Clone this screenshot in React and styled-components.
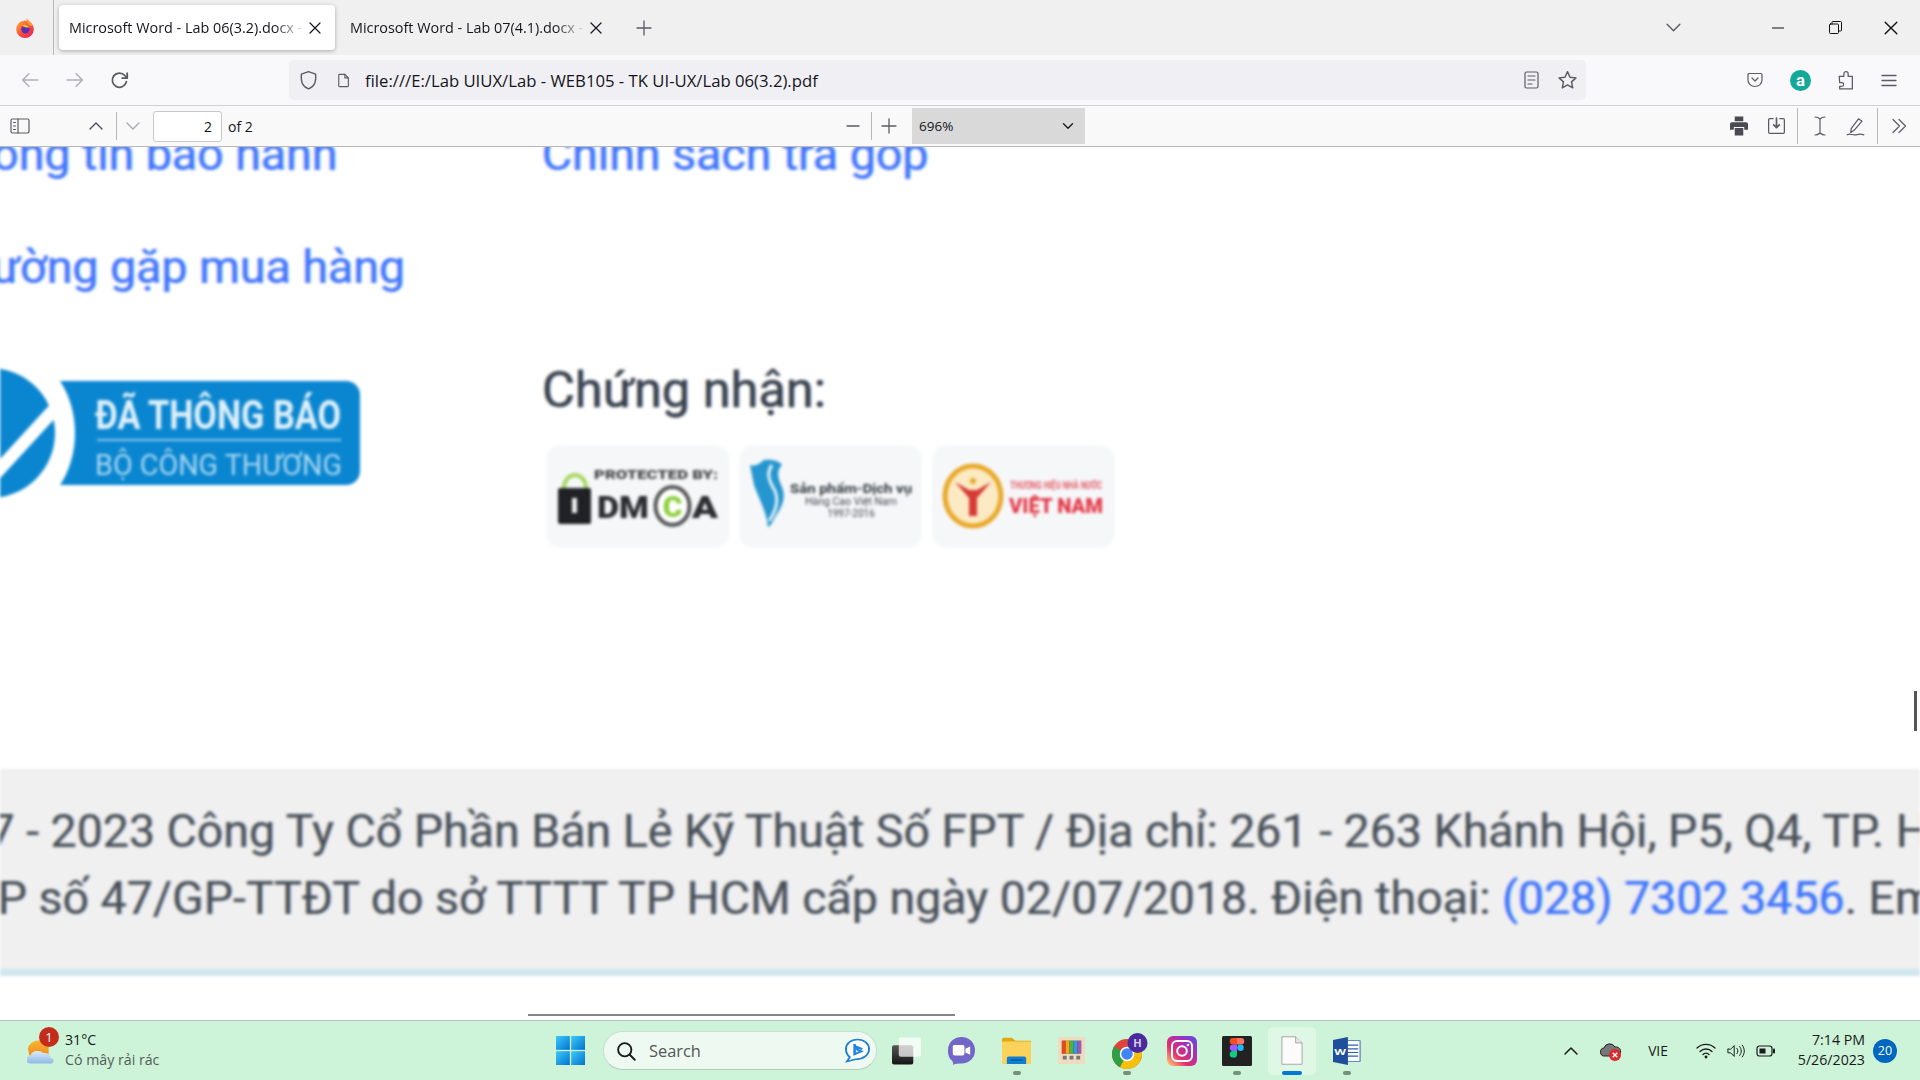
import React from "react";
import styled, { createGlobalStyle } from "styled-components";

const Global = createGlobalStyle`
  html, body { margin: 0; padding: 0; width: 1920px; height: 1080px; overflow: hidden; background: #fff; }
  * { box-sizing: border-box; }
  #root { width: 1920px; height: 1080px; }
`;
const UI = `"Open Sans", "Noto Sans", sans-serif`;
const DOC = `Roboto, "Noto Sans", sans-serif`;
const BLUE_FRINGE = `-1.2px 0 0 rgba(190,90,255,.38), 1.2px 0 0 rgba(0,190,255,.38)`;
const DARK_FRINGE = `-1.2px 0 0 rgba(255,165,70,.38), 1.2px 0 0 rgba(60,130,255,.38)`;

const Screen = styled.div`display:flex;flex-direction:column;width:1920px;height:1080px;font-family:${UI};position:relative;overflow:hidden;`;
const TabBar = styled.div`display:flex;align-items:center;height:55px;background:#f0f0f0;flex:none;padding-right:21px;`;
const Logo = styled.div`display:flex;align-items:center;justify-content:center;width:54px;height:55px;padding-right:4px;border-right:1px solid #b9b9bc;`;
const Tab = styled.div`
  display:flex;align-items:center;width:276px;height:45px;margin-left:${p=>p.$gap||0}px;padding-left:10px;border-radius:4px;
  background:${p=>p.$active?"#fff":"transparent"};box-shadow:${p=>p.$active?"0 1px 4px rgba(0,0,0,.3)":"none"};
  color:#15141a;
`;
const TabTitle = styled.span`
  width:236px;white-space:nowrap;overflow:hidden;font-size:14.4px;
  -webkit-mask-image:linear-gradient(90deg,#000 87%,transparent 100%);mask-image:linear-gradient(90deg,#000 87%,transparent 100%);
`;
const Slot = styled.div`
  display:flex;align-items:center;justify-content:center;flex:none;width:${p=>p.$w}px;margin-left:${p=>p.$ml||0}px;
  color:${p=>p.$c||"#5b5b66"};position:relative;
`;
const Grow = styled.div`flex:1;`;
const NavBar = styled.div`display:flex;align-items:center;height:51px;background:#f9f9fb;flex:none;border-bottom:1px solid #cfcfd8;padding-left:8px;`;
const Url = styled.div`
  display:flex;align-items:center;width:1297px;height:40px;margin-left:147px;padding-right:7px;background:#f0f0f4;border-radius:5px;flex:none;
`;
const UrlText = styled.span`flex:1;font-size:16.7px;color:#15141a;margin-left:4px;white-space:nowrap;`;
const PdfBar = styled.div`display:flex;align-items:center;height:41px;background:#f9f9fa;border-bottom:1px solid #b8b8b8;flex:none;padding-right:11px;`;
const Sep = styled.div`width:1px;height:${p=>p.$h||28}px;background:#b8b8b8;flex:none;margin-left:${p=>p.$ml||0}px;`;
const PageInput = styled.div`
  width:69px;height:31px;margin-left:4px;border:1px solid #c8c8c8;border-radius:3px;background:#fff;display:flex;align-items:center;justify-content:flex-end;
  padding-right:9px;font-size:14px;color:#15141a;
`;
const OfText = styled.span`font-size:14px;color:#15141a;margin-left:6px;width:30px;white-space:nowrap;`;
const ZoomSel = styled.div`
  width:173px;height:36px;margin-left:13px;background:#d9d9da;display:flex;align-items:center;justify-content:space-between;padding:0 10px 0 7px;font-size:13.5px;color:#15141a;flex:none;
`;

const Doc = styled.div`flex:1;position:relative;overflow:hidden;background:#fff;font-family:${DOC};display:flex;flex-direction:column;`;
const Blur = styled.div`filter:blur(1.35px);display:flex;flex-direction:column;height:100%;`;
const Cols = styled.div`display:grid;grid-template-columns:542px 1fr;height:622px;flex:none;`;
const Col = styled.div`display:flex;flex-direction:column;min-width:0;`;
const LinkText = styled.div`
  font-size:46.5px;line-height:56px;color:#3f74fa;white-space:nowrap;margin-left:${p=>p.$ml||0}px;margin-top:${p=>p.$mt||0}px;
  text-shadow:${BLUE_FRINGE};
`;
const LogoWrap = styled.div`margin-top:72px;height:136px;`;
const Heading = styled.div`font-size:50.5px;line-height:60px;color:#38434f;margin-top:178px;-webkit-text-stroke:.4px #38434f;text-shadow:${DARK_FRINGE};`;
const BadgeRow = styled.div`display:flex;margin:25px 0 0 4px;gap:10px;`;
const Badge = styled.div`width:183px;height:103px;border-radius:15px;background:#f6f7f9;display:flex;align-items:center;justify-content:center;flex:none;`;
const Band = styled.div`height:200px;background:#f0f0f0;flex:none;padding-top:29px;overflow:hidden;`;
const BandLine = styled.div`
  font-size:46.5px;line-height:67px;color:#465059;white-space:nowrap;margin-left:${p=>p.$ml}px;text-shadow:${DARK_FRINGE};
  span{color:#3f74fa;text-shadow:${BLUE_FRINGE};}
`;
const BandEdge = styled.div`height:7px;background:#d0e6f0;flex:none;`;
const VThumb = styled.div`position:absolute;right:3px;top:544px;width:3px;height:40px;background:#555;`;
const HThumb = styled.div`position:absolute;left:528px;bottom:4px;width:427px;height:2px;background:#858585;`;

const Taskbar = styled.div`
  display:flex;align-items:center;height:60px;flex:none;background:#cdf3d8;border-top:1px solid #aec6b5;padding-right:15px;color:#1a1a1a;
`;
const Weather = styled.div`display:flex;align-items:center;width:543px;padding-left:27px;flex:none;`;
const WeatherIcon = styled.div`position:relative;width:30px;height:28px;margin-right:8px;flex:none;`;
const RedDot = styled.div`position:absolute;left:12px;top:-10px;width:20px;height:20px;border-radius:50%;background:#c42b1c;color:#fff;font-size:13px;display:flex;align-items:center;justify-content:center;`;
const WeatherText = styled.div`display:flex;flex-direction:column;font-size:14.2px;line-height:20px;margin-top:-1px;`;
const Dim = styled.span`color:#555c58;`;
const Search = styled.div`
  display:flex;align-items:center;width:274px;height:39px;margin-left:5px;border-radius:20px;background:#eefaf1;border:1px solid #c9dfd0;border-bottom-color:#b4cbbb;padding:0 6px 0 12px;font-size:16.4px;color:#555;flex:none;
`;
const SearchLabel = styled.span`flex:1;margin-left:13px;`;
const TaskIcon = styled.div`
  position:relative;display:flex;align-items:center;justify-content:center;width:${p=>p.$active?48:55}px;height:48px;flex:none;margin-right:${p=>p.$active?3.5:0}px;margin-left:${p=>p.$ml||(p.$active?3.5:0)}px;
  background:${p=>p.$active?"#dff7e5":"transparent"};border-radius:5px;
`;
const Pip = styled.div`position:absolute;bottom:0;left:50%;transform:translateX(-50%);width:${p=>p.$on?20:8}px;height:4px;border-radius:2px;background:${p=>p.$on?"#0078d4":"#76907e"};`;
const Lang = styled.span`font-size:13.8px;color:#1a1a1a;`;
const Clock = styled.div`width:78px;flex:none;display:flex;flex-direction:column;align-items:flex-end;font-size:14.2px;line-height:20px;margin-top:-1px;color:#1a1a1a;`;
const Count = styled.div`width:24px;height:24px;border-radius:50%;background:#0067c0;color:#fff;font-size:12.5px;display:flex;align-items:center;justify-content:center;`;

const S = ({w=16,h=16,vb="0 0 16 16",children,fill="none",stroke="currentColor",sw=1.3})=>(
  <svg width={w} height={h} viewBox={vb} fill={fill} stroke={stroke} strokeWidth={sw} strokeLinecap="round" strokeLinejoin="round">{children}</svg>
);
const Firefox = ()=>(
  <svg width="20" height="21" viewBox="0 0 22 24">
    <defs>
      <linearGradient id="ff" x1="0" y1="0" x2="1" y2="1"><stop offset="0" stopColor="#ffb32c"/><stop offset=".5" stopColor="#ff4f3c"/><stop offset="1" stopColor="#e3195f"/></linearGradient>
    </defs>
    <circle cx="11" cy="14" r="10" fill="url(#ff)"/>
    <path d="M12 1c3 3 7 5 8 10l-5-2z" fill="#ff9a2e"/>
    <circle cx="11.500" cy="14" r="4.800" fill="#5b2fb0"/>
    <path d="M7 10c3-2 7-1 9 2l-4 0z" fill="#ffbd2e"/>
  </svg>
);
const X = ({s=12})=>(<S w={s} h={s} vb="0 0 12 12" sw={1.2}><path d="M1 1l10 10M11 1L1 11"/></S>);
const Chevron = ({up,s=16,sw=1.5})=>(<S w={s} h={s} sw={sw}><path d={up?"M2 11l6-6 6 6":"M2 5l6 6 6-6"}/></S>);

const Bing = ()=>(
  <svg width="25" height="25" viewBox="0 0 26 34" preserveAspectRatio="none">
    <path d="M13 2c7 0 12 6 12 13 0 8-6 14-14 14l-9 3 3-6C2 23 1 19 1 15 1 8 6 2 13 2z" fill="#fff" stroke="#1b7fd6" strokeWidth="2"/>
    <path d="M10 8v14l7-4-4-2-1-4 6 3" fill="none" stroke="#1b84e0" strokeWidth="2.600"/>
  </svg>
);
const Win = ()=>(
  <svg width="29" height="29" viewBox="0 0 30 30">
    <defs><linearGradient id="w" x1="0" y1="0" x2="1" y2="1"><stop offset="0" stopColor="#3ecbf7"/><stop offset="1" stopColor="#0072d2"/></linearGradient></defs>
    <rect x="0" y="0" width="14.300" height="14.300" fill="url(#w)"/><rect x="15.700" y="0" width="14.300" height="14.300" fill="url(#w)"/>
    <rect x="0" y="15.700" width="14.300" height="14.300" fill="url(#w)"/><rect x="15.700" y="15.700" width="14.300" height="14.300" fill="url(#w)"/>
  </svg>
);
const TaskView = ()=>(
  <svg width="29" height="28" viewBox="0 0 30 28">
    <defs><linearGradient id="tv" x1="0" y1="0" x2="0" y2="1"><stop offset="0" stopColor="#555"/><stop offset="1" stopColor="#151515"/></linearGradient></defs>
    <rect x="0" y="8" width="22" height="20" rx="2" fill="url(#tv)"/>
    <rect x="7" y="0" width="23" height="20" rx="2" fill="#fff" opacity=".72"/>
  </svg>
);
const Meet = ()=>(
  <svg width="29" height="28" viewBox="0 0 30 38" preserveAspectRatio="none">
    <path d="M15 0c8 0 14 8 14 18s-6 18-14 18c-3 0-6 0-9 2 1-3 0-4-1-6C2 29 1 24 1 18 1 8 7 0 15 0z" fill="#7266c9"/>
    <rect x="6" y="11" width="12" height="14" rx="2" fill="#fff"/><path d="M19 16l5-3v11l-5-3z" fill="#fff"/>
  </svg>
);
const Folder = ()=>(
  <svg width="29" height="27" viewBox="0 0 30 36" preserveAspectRatio="none">
    <path d="M0 3a2 2 0 012-2h8l4 4h16v30H0z" fill="#e2a90f"/>
    <rect x="0" y="6" width="30" height="30" rx="1" fill="#fbd35b"/>
    <path d="M5 28a2 2 0 012-2h16a2 2 0 012 2v8H5z" fill="#0f7fd4"/><rect x="9" y="30" width="12" height="1.600" fill="#0a4f8a"/>
  </svg>
);
const Toys = ()=>(
  <svg width="27" height="27" viewBox="0 0 28 36" preserveAspectRatio="none">
    <rect width="28" height="36" rx="1" fill="#efdcc0"/><rect x="4" y="5" width="20" height="17" fill="#333"/>
    <rect x="4" y="5" width="4" height="17" fill="#e8491c"/><rect x="8" y="5" width="4" height="17" fill="#f5a81c"/><rect x="12" y="5" width="4" height="17" fill="#4db33d"/><rect x="16" y="5" width="4" height="17" fill="#2e9ee0"/><rect x="20" y="5" width="4" height="17" fill="#9b59b6"/>
    <rect x="5" y="25" width="4" height="5" fill="#777"/><rect x="12" y="25" width="4" height="5" fill="#777"/><rect x="19" y="25" width="4" height="5" fill="#777"/>
  </svg>
);
const Chrome = ()=>(
  <svg width="42" height="36" viewBox="0 0 42 36">
    <circle cx="21" cy="21" r="15" fill="#db4437"/>
    <path d="M21 21L8 13.500A15 15 0 0 0 14 34.300z" fill="#2f9e44"/><path d="M21 21l-7 13.300A15 15 0 0 0 35 26z" fill="#f4c20d"/><path d="M21 21l14 5a15 15 0 0 0-1-13z" fill="#f4c20d"/>
    <circle cx="21" cy="21" r="6.500" fill="#4285f4" stroke="#fff" strokeWidth="1.500"/>
    <circle cx="31.500" cy="10" r="10" fill="#4a2a9c"/>
    <text x="31.500" y="14" fontSize="11" fontWeight="700" fill="#d7cff0" textAnchor="middle" fontFamily="Open Sans, sans-serif">H</text>
  </svg>
);
const Insta = ()=>(
  <svg width="30" height="30" viewBox="0 0 30 30">
    <defs><linearGradient id="ig" x1="0" y1="1" x2="1" y2="0"><stop offset="0" stopColor="#feda75"/><stop offset=".35" stopColor="#e1306c"/><stop offset=".7" stopColor="#a02fc0"/><stop offset="1" stopColor="#5b51d8"/></linearGradient></defs>
    <rect width="30" height="30" rx="6" fill="url(#ig)"/>
    <rect x="5" y="5" width="20" height="20" rx="5" fill="none" stroke="#fff" strokeWidth="2"/>
    <circle cx="15" cy="15" r="4.800" fill="none" stroke="#fff" strokeWidth="2"/><circle cx="21" cy="9" r="1.300" fill="#fff"/>
  </svg>
);
const Figma = ()=>(
  <svg width="30" height="30" viewBox="0 0 30 30">
    <rect width="30" height="30" rx="1.500" fill="#222"/>
    <path d="M11 2h4v6.500h-4a3.250 3.250 0 010-6.500z" fill="#f24e1e"/><path d="M15 2h4a3.250 3.250 0 010 6.500h-4z" fill="#ff7262"/>
    <path d="M11 8.500h4V15h-4a3.250 3.250 0 010-6.500z" fill="#a259ff"/><circle cx="18.500" cy="11.750" r="3.250" fill="#1abcfe"/>
    <path d="M11 15h4v3.500a3.500 3.500 0 01-4 3.100 3.300 3.300 0 010-6.600z" fill="#0acf83"/>
  </svg>
);
const FileIcon = ()=>(
  <svg width="22" height="29" viewBox="0 0 24 38" preserveAspectRatio="none">
    <path d="M1 1h15l7 8v28H1z" fill="#fbfbfb" stroke="#9a9a9a"/><path d="M16 1v8h7" fill="#e8e8e8" stroke="#9a9a9a"/>
  </svg>
);
const Word = ()=>(
  <svg width="28" height="28" viewBox="0 0 30 38" preserveAspectRatio="none">
    <rect x="9" y="5" width="20" height="28" fill="#fff" stroke="#2b5fae"/>
    <path d="M16 11h11M16 16h11M16 21h11M16 26h11" stroke="#2b5fae" strokeWidth="1.600"/>
    <path d="M0 4l16-4v38L0 34z" fill="#1f4f9c"/>
    <text x="7.500" y="24" fontSize="13" fontWeight="700" fill="#fff" textAnchor="middle" fontFamily="Open Sans, sans-serif">W</text>
  </svg>
);
const Sun = ()=>(
  <svg width="27" height="28" viewBox="0 0 30 40" preserveAspectRatio="none">
    <defs>
      <linearGradient id="sun" x1="0" y1="0" x2="0" y2="1"><stop offset="0" stopColor="#f7b733"/><stop offset="1" stopColor="#f08a1c"/></linearGradient>
      <linearGradient id="cl" x1="0" y1="0" x2="0" y2="1"><stop offset="0" stopColor="#dcecf9"/><stop offset="1" stopColor="#8db8e6"/></linearGradient>
    </defs>
    <path d="M1 17A12 13 0 0 1 13 5h11v23H3z" fill="url(#sun)"/>
    <path d="M5 38a6 6 0 01-1-12 8 8 0 0114-3 6.500 6.500 0 018 7 4 4 0 01-1 8z" fill="url(#cl)"/>
  </svg>
);
const GovLogo = ()=>(
  <svg width="362" height="136" viewBox="0 0 362 136">
    <circle cx="-10" cy="66" r="65" fill="#0a86d0"/>
    <path d="M62 34L-15 118" stroke="#fff" strokeWidth="13"/>
    <path d="M60 14h286a14 14 0 0114 14v76a14 14 0 01-14 14H60c20-30 20-74 0-104z" fill="#0a86d0"/>
    <text x="95" y="62" fontFamily="Roboto, sans-serif" fontWeight="700" fontSize="41" fill="#dff0fa" textLength="246" lengthAdjust="spacingAndGlyphs">ĐÃ THÔNG BÁO</text>
    <rect x="97" y="72" width="244" height="2" fill="#8cc8ec"/>
    <text x="95" y="108" fontFamily="Roboto, sans-serif" fontSize="29" fill="#a9d7f1" textLength="247" lengthAdjust="spacingAndGlyphs">BỘ CÔNG THƯƠNG</text>
  </svg>
);
const Dmca = ()=>(
  <svg width="170" height="64" viewBox="0 0 170 64">
    <path d="M11 23a11 13 0 0122 0" fill="none" stroke="#a6d85a" strokeWidth="4"/>
    <text x="41" y="13.500" fontFamily="Roboto, sans-serif" fontWeight="900" fontSize="13.500" fill="#444" textLength="124" lengthAdjust="spacingAndGlyphs">PROTECTED BY:</text>
    <rect x="5" y="23" width="33" height="36" rx="2" fill="#1f2124"/><rect x="19" y="33" width="5" height="15" fill="#eee"/>
    <text x="44" y="53" fontFamily="Roboto, sans-serif" fontWeight="900" fontSize="31" fill="#2a2c2f" textLength="52" lengthAdjust="spacingAndGlyphs">DM</text>
    <ellipse cx="119.500" cy="41" rx="17" ry="19" fill="#fff" stroke="#555" strokeWidth="4"/>
    <text x="119.500" y="52" fontFamily="Roboto, sans-serif" fontWeight="900" fontSize="30" fill="#8ccf3c" textAnchor="middle">C</text>
    <text x="139" y="53" fontFamily="Roboto, sans-serif" fontWeight="900" fontSize="31" fill="#2a2c2f" textLength="26" lengthAdjust="spacingAndGlyphs">A</text>
  </svg>
);
const Quality = ()=>(
  <svg width="170" height="76" viewBox="0 0 170 76">
    <path d="M4 6c6 2 10-2 14-5 10-1 16 2 18 5-6 6-4 14 0 22 3 8 3 16-7 30-2 4-5 10-7 10-1-14-9-28-14-42z" fill="#2596cf"/>
    <path d="M26 6c-6 8-3 16 3 26 4 10 1 20-6 30" fill="none" stroke="#e8f3f8" strokeWidth="3"/>
    <text x="105" y="34" fontFamily="Roboto, sans-serif" fontWeight="700" fontSize="13" fill="#2e363d" textAnchor="middle" textLength="122" lengthAdjust="spacingAndGlyphs">Sản phẩm-Dịch vụ</text>
    <text x="105" y="46" fontFamily="Roboto, sans-serif" fontSize="10" fill="#3f474e" textAnchor="middle" textLength="92" lengthAdjust="spacingAndGlyphs">Hàng Cao Việt Nam</text>
    <text x="105" y="58" fontFamily="Roboto, sans-serif" fontSize="10" fill="#3f474e" textAnchor="middle">1997-2016</text>
  </svg>
);
const VnBrand = ()=>(
  <svg width="170" height="70" viewBox="0 0 170 70">
    <ellipse cx="34" cy="34" rx="28" ry="30" fill="#fbeac3" stroke="#e9a92a" strokeWidth="5"/>
    <path d="M16 20l14 16v18h8V36l14-16-14 8h-8z" fill="#d63a34"/><circle cx="34" cy="19" r="3" fill="#eaa926"/>
    <text x="117" y="27" fontFamily="Roboto, sans-serif" fontWeight="700" fontSize="10" fill="#df5f6a" textAnchor="middle" textLength="92" lengthAdjust="spacingAndGlyphs">THƯƠNG HIỆU NHÀ NƯỚC</text>
    <text x="117" y="51" fontFamily="Roboto, sans-serif" fontWeight="900" fontSize="20" fill="#e23a48" textAnchor="middle" textLength="94" lengthAdjust="spacingAndGlyphs">VIỆT NAM</text>
  </svg>
);

export default function App(){
  return (
    <Screen>
      <Global/>
      <TabBar>
        <Logo><Firefox/></Logo>
        <Tab $active $gap={5}><TabTitle>Microsoft Word - Lab 06(3.2).docx -</TabTitle><Slot $w={20} $c="#15141a"><X/></Slot></Tab>
        <Tab $gap={5}><TabTitle>Microsoft Word - Lab 07(4.1).docx -</TabTitle><Slot $w={20} $c="#15141a"><X/></Slot></Tab>
        <Slot $w={16} $ml={20}><S w={16} h={16} sw={1.3}><path d="M8 1v14M1 8h14"/></S></Slot>
        <Grow/>
        <Slot $w={20} $c="#5b5b66"><Chevron s={17} sw={1.3}/></Slot>
        <Slot $w={16} $ml={87} $c="#111"><S w={12} h={12} vb="0 0 12 12" sw={1}><path d="M0 6h12"/></S></Slot>
        <Slot $w={16} $ml={41} $c="#111"><S w={13} h={13} vb="0 0 13 13" sw={1}><rect x=".5" y="3" width="9" height="9.500" rx="1"/><path d="M3 3V1.500a1 1 0 011-1h7.500a1 1 0 011 1V9a1 1 0 01-1 1H10"/></S></Slot>
        <Slot $w={16} $ml={40} $c="#111"><X s={14}/></Slot>
      </TabBar>
      <NavBar>
        <Slot $w={44} $c="#b1b1b6"><S w={18} h={18} sw={1.4}><path d="M15 8H1.500M7 2.500L1.500 8 7 13.500"/></S></Slot>
        <Slot $w={45} $c="#b1b1b6"><S w={18} h={18} sw={1.4}><path d="M1 8h13.500M9 2.500L14.500 8 9 13.500"/></S></Slot>
        <Slot $w={45} $c="#5b5b66"><S w={19} h={19} sw={1.5}><path d="M13.800 9a6 6 0 11-1.300-5.200L14.500 6M14.500 1.800V6h-4.200"/></S></Slot>
        <Url>
          <Slot $w={38}><S w={19} h={20} sw={1.2}><path d="M8 1l6 2c.5 7-1 10.500-6 12.500C3 13.500 1.500 10 2 3z"/></S></Slot>
          <Slot $w={34}><S w={14} h={17} sw={1.3}><path d="M3 1h6l4 4v9a1 1 0 01-1 1H3a1 1 0 01-1-1V2a1 1 0 011-1z"/><path d="M9 1v4h4"/></S></Slot>
          <UrlText>file:///E:/Lab UIUX/Lab - WEB105 - TK UI-UX/Lab 06(3.2).pdf</UrlText>
          <Slot $w={20}><S w={15} h={18} vb="0 0 15 18" sw={1.2}><rect x="1" y="1" width="13" height="16" rx="1.500"/><path d="M4 5h7M4 9h7M4 13h4"/></S></Slot>
          <Slot $w={24} $ml={14}><S w={21} h={20} sw={1.15}><path d="M8 1.300l2 4.500 4.800.5-3.600 3.200 1 4.800L8 11.900 3.800 14.300l1-4.800L1.200 6.300 6 5.800z"/></S></Slot>
        </Url>
        <Slot $w={20} $ml={159}><S w={18} h={16} sw={1.2}><path d="M2 1.500h12a1 1 0 011 1v5.500a7 6.500 0 01-14 0V2.500a1 1 0 011-1z"/><path d="M5 6l3 3 3-3"/></S></Slot>
        <Slot $w={24} $ml={23}><svg width="21" height="21" viewBox="0 0 20 20"><circle cx="10" cy="10" r="10" fill="#12a89a"/><text x="10" y="15.500" fontSize="16" fontWeight="700" fill="#fff" textAnchor="middle" fontFamily="Roboto, sans-serif">a</text></svg></Slot>
        <Slot $w={22} $ml={22}><S w={17} h={20} vb="0 0 16 19" sw={1.2}><path d="M2 6h4.500V3.500a2 2 0 014 0V6H14.500v12H2.500v-2.500h2a1.700 1.700 0 000-3.500h-2z"/></S></Slot>
        <Slot $w={18} $ml={24}><S w={16} h={13} vb="0 0 16 13" sw={1.3}><path d="M1 1.500h14M1 6.500h14M1 11.500h14"/></S></Slot>
      </NavBar>
      <PdfBar>
        <Slot $w={40}><S w={20} h={16} vb="0 0 20 16" sw={1.2}><rect x="1" y="1" width="18" height="14" rx="1.500"/><path d="M8 1v14M3.500 4.500h2M3.500 8h2M3.500 11.500h2"/></S></Slot>
        <Slot $w={40} $ml={36} $c="#4f4f58"><Chevron up s={16} sw={1.4}/></Slot>
        <Sep/>
        <Slot $w={32} $c="#a8a8ae"><Chevron s={16} sw={1.3}/></Slot>
        <PageInput>2</PageInput>
        <OfText>of 2</OfText>
        <Slot $w={20} $ml={585}><S w={14} h={14} vb="0 0 14 14" sw={1.3}><path d="M1 7h12"/></S></Slot>
        <Sep $ml={8}/>
        <Slot $w={20} $ml={7}><S w={16} h={16} sw={1.3}><path d="M8 1v14M1 8h14"/></S></Slot>
        <ZoomSel>696%<Slot $w={14} $c="#15141a"><Chevron s={12} sw={1.7}/></Slot></ZoomSel>
        <Grow/>
        <Slot $w={24} $c="#4a4a52"><svg width="18" height="20" viewBox="0 0 19 20" fill="currentColor"><path d="M5 0h9v5H5zM2 6h15a2 2 0 012 2v6h-4v-3H4v3H0V8a2 2 0 012-2zM5 12h9v8H5z"/></svg></Slot>
        <Slot $w={22} $ml={14}><S w={19} h={18} vb="0 0 16 16" sw={1.1}><path d="M5 1.500H2a1 1 0 00-1 1v11a1 1 0 001 1h12a1 1 0 001-1v-11a1 1 0 00-1-1h-3"/><path d="M8 1v8M5.500 7L8 9.500 10.500 7" strokeWidth="1.500"/></S></Slot>
        <Sep $h={36} $ml={10}/>
        <Slot $w={22} $ml={11}><S w={12} h={20} vb="0 0 12 20" sw={1.2}><path d="M1 1c3 0 4 1 5 2 1-1 2-2 5-2M1 19c3 0 4-1 5-2 1 1 2 2 5 2M6 3v14"/></S></Slot>
        <Slot $w={22} $ml={13}><S w={19} h={19} sw={1.05}><path d="M10.500 1.500l3 2-6.500 7.500-3 2 .5-3.500z"/><path d="M1 15c3-1.500 4 .5 7 0s4-1 7 0"/></S></Slot>
        <Sep $h={36} $ml={11}/>
        <Slot $w={20} $ml={11}><S w={16} h={16} sw={1.2}><path d="M2 1.500l6.500 6.500L2 14.500M8 1.500l6.500 6.500L8 14.500"/></S></Slot>
      </PdfBar>
      <Doc>
        <Blur>
          <Cols>
            <Col>
              <LinkText $ml={-61} $mt={-21}>Thông tin bảo hành</LinkText>
              <LinkText $ml={-217} $mt={57}>Câu hỏi thường gặp mua hàng</LinkText>
              <LogoWrap><GovLogo/></LogoWrap>
            </Col>
            <Col>
              <LinkText $mt={-21}>Chính sách trả góp</LinkText>
              <Heading>Chứng nhận:</Heading>
              <BadgeRow>
                <Badge><Dmca/></Badge>
                <Badge><Quality/></Badge>
                <Badge><VnBrand/></Badge>
              </BadgeRow>
            </Col>
          </Cols>
          <Band>
            <BandLine $ml={-138}>© 2007 - 2023 Công Ty Cổ Phần Bán Lẻ Kỹ Thuật Số FPT / Địa chỉ: 261 - 263 Khánh Hội, P5, Q4, TP. Hồ Chí Minh</BandLine>
            <BandLine $ml={-34}>GP số 47/GP-TTĐT do sở TTTT TP HCM cấp ngày 02/07/2018. Điện thoại: <span>(028) 7302 3456</span>. Email: fptshop@fpt.com.vn</BandLine>
          </Band>
          <BandEdge/>
        </Blur>
        <VThumb/>
        <HThumb/>
      </Doc>
      <Taskbar>
        <Weather>
          <WeatherIcon><Sun/><RedDot>1</RedDot></WeatherIcon>
          <WeatherText><span>31°C</span><Dim>Có mây rải rác</Dim></WeatherText>
        </Weather>
        <Slot $w={55}><Win/></Slot>
        <Search>
          <S w={20} h={20} sw={1.5} stroke="#1a1a1a"><circle cx="7" cy="7" r="5.300"/><path d="M11 11l4 4"/></S>
          <SearchLabel>Search</SearchLabel>
          <Bing/>
        </Search>
        <TaskIcon $ml={2}><TaskView/></TaskIcon>
        <TaskIcon><Meet/></TaskIcon>
        <TaskIcon><Folder/><Pip/></TaskIcon>
        <TaskIcon><Toys/></TaskIcon>
        <TaskIcon><Chrome/><Pip/></TaskIcon>
        <TaskIcon><Insta/></TaskIcon>
        <TaskIcon><Figma/><Pip/></TaskIcon>
        <TaskIcon $active><FileIcon/><Pip $on/></TaskIcon>
        <TaskIcon><Word/><Pip/></TaskIcon>
        <Grow/>
        <Slot $w={40} $c="#1a1a1a"><S w={16} h={16} sw={1.5}><path d="M2 11l6-6 6 6"/></S></Slot>
        <Slot $w={40}><svg width="22" height="20" viewBox="0 0 22 20"><path d="M5 15a4 4 0 01-1-8 6 6 0 0111-1 4 4 0 012 9z" fill="#777" stroke="#222" strokeWidth="1"/><circle cx="15" cy="14" r="6" fill="#d92b2b"/><path d="M12.700 11.700l4.600 4.600M17.300 11.700l-4.600 4.600" stroke="#fff" strokeWidth="1.400"/></svg></Slot>
        <Slot $w={54}><Lang>VIE</Lang></Slot>
        <Slot $w={42} $c="#1a1a1a"><S w={20} h={16} vb="0 0 20 16" sw={1.3}><path d="M1 5a13 13 0 0118 0M4 8.500a8.500 8.500 0 0112 0M7 11.500a4 4 0 016 0"/><circle cx="10" cy="14" r=".8" fill="currentColor"/></S></Slot>
        <Slot $w={18} $c="#1a1a1a"><S w={20} h={16} vb="0 0 20 16" sw={1.1}><path d="M1 6v4h3l4 4V2L4 6zM11 5c1.500 2 1.500 4 0 6M14 3c2.500 3 2.500 7 0 10M17 1.500c3 4 3 9 0 13"/></S></Slot>
        <Slot $w={42} $c="#1a1a1a"><S w={20} h={14} vb="0 0 20 14" sw={1.2}><rect x="1" y="2" width="15" height="10" rx="2.500"/><rect x="3.500" y="4.500" width="6" height="5" fill="currentColor" stroke="none"/><path d="M18 5.500v3" strokeWidth="2"/></S></Slot>
        <Clock><span>7:14 PM</span><span>5/26/2023</span></Clock>
        <Slot $w={40}><Count>20</Count></Slot>
      </Taskbar>
    </Screen>
  );
}
